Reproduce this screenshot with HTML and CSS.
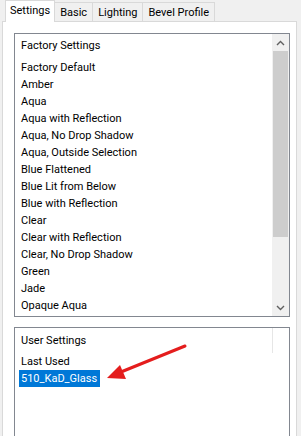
FILE: index.html
```html
<!DOCTYPE html>
<html lang="en">
<head>
  <meta charset="UTF-8">
  <meta name="viewport" content="width=device-width, initial-scale=1.0">
  <title>Glass Presets</title>
  <link rel="stylesheet" href="styles.css">
</head>
<body>

  <div class="dialog">
    <div class="tabstrip">
      <div class="tab active">Settings</div>
      <div class="tab">Basic</div>
      <div class="tab">Lighting</div>
      <div class="tab">Bevel Profile</div>
    </div>

    <div class="panel">
      <!-- factory presets -->
      <div class="listbox factory">
        <div class="items">
          <div class="group">Factory Settings</div>
          <div class="item">Factory Default</div>
          <div class="item">Amber</div>
          <div class="item">Aqua</div>
          <div class="item">Aqua with Reflection</div>
          <div class="item">Aqua, No Drop Shadow</div>
          <div class="item">Aqua, Outside Selection</div>
          <div class="item">Blue Flattened</div>
          <div class="item">Blue Lit from Below</div>
          <div class="item">Blue with Reflection</div>
          <div class="item">Clear</div>
          <div class="item">Clear with Reflection</div>
          <div class="item">Clear, No Drop Shadow</div>
          <div class="item">Green</div>
          <div class="item">Jade</div>
          <div class="item">Opaque Aqua</div>
        </div>
        <div class="scrollbar">
          <div class="sb-btn">
            <svg width="9" height="6" viewBox="0 0 9 6"><path d="M1 5 L4.5 1.5 L8 5" fill="none" stroke="#606060" stroke-width="1.4"/></svg>
          </div>
          <div class="sb-track">
            <div class="sb-thumb"></div>
          </div>
          <div class="sb-btn">
            <svg width="9" height="6" viewBox="0 0 9 6"><path d="M1 1 L4.5 4.5 L8 1" fill="none" stroke="#606060" stroke-width="1.4"/></svg>
          </div>
        </div>
      </div>

      <!-- saved presets -->
      <div class="listbox user">
        <div class="items">
          <div class="group">User Settings</div>
          <div class="item">Last Used</div>
          <div class="item"><span class="selected">510_KaD_Glass</span></div>
        </div>
        <div class="sb-stub"></div>
      </div>
    </div>
  </div>

  <svg class="callout" width="301" height="436" viewBox="0 0 301 436">
    <line x1="185" y1="346" x2="116" y2="374" stroke="#e41d1d" stroke-width="3" stroke-linecap="round"/>
    <polygon points="107,378 120,365 126,379" fill="#e41d1d"/>
  </svg>

</body>
</html>
```

FILE: styles.css
```css
body {
  margin: 0;
  background: #f0f0f0;
  font-family: Roboto, "Liberation Sans", Arial, sans-serif;
  font-size: 11px;
  color: #000;
  overflow: hidden;
  height: 436px;
}
.dialog {
  display: flex;
  flex-direction: column;
  height: 436px;
  padding: 0 4px 0 2px;
}
.tabstrip {
  display: flex;
  align-items: flex-end;
  height: 21px;
  padding-left: 3px;
}
.tab {
  height: 18px;
  line-height: 19px;
  padding: 0 5px;
  border: 1px solid #d9d9d9;
  border-bottom: none;
  margin-left: -1px;
  background: #f0f0f0;
}
.tab.active {
  position: relative;
  height: 21px;
  line-height: 20px;
  margin-bottom: -1px;
  padding: 0 4px;
  margin-left: 0;
  background: #fff;
  z-index: 1;
}
.panel {
  flex: 1;
  display: flex;
  flex-direction: column;
  background: #fff;
  border: 1px solid #d9d9d9;
  border-bottom: none;
  padding: 11px 6px 0 11px;
}
.listbox {
  display: flex;
  border: 1px solid #828790;
  background: #fff;
}
.listbox .items {
  flex: 1;
  padding: 3px 0 0 4px;
}
.group {
  height: 17px;
  line-height: 17px;
  padding-left: 2px;
  margin-bottom: 5px;
}
.item {
  height: 17px;
  line-height: 17px;
  padding-left: 2px;
}
.listbox.factory {
  height: 282px;
  flex-shrink: 0;
}
.listbox.user {
  flex: 1;
  margin-top: 10px;
  border-bottom: none;
}
.user .items {
  padding-top: 4px;
}
.user .group {
  margin-bottom: 4px;
}
.selected {
  display: inline-block;
  background: #0078d7;
  color: #fff;
  padding: 0 3px 0 2px;
  margin-left: -2px;
}
.scrollbar {
  width: 17px;
  display: flex;
  flex-direction: column;
  background: #f0f0f0;
}
.sb-btn {
  height: 17px;
  display: flex;
  align-items: center;
  justify-content: center;
}
.sb-track {
  flex: 1;
}
.sb-thumb {
  height: 186px;
  background: #cdcdcd;
  margin: 0 1px;
}
.sb-stub {
  width: 16px;
  height: 25px;
  border-left: 1px solid #e6e6e6;
}
.callout {
  position: absolute;
  left: 0;
  top: 0;
}
```
